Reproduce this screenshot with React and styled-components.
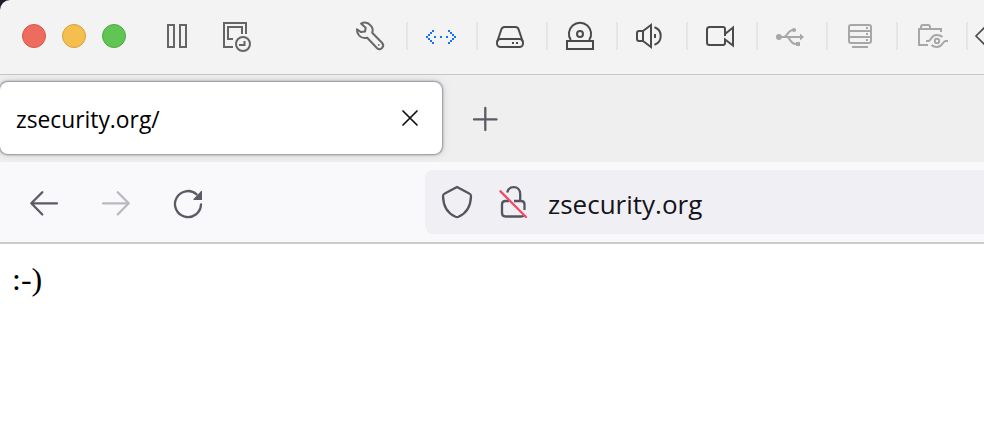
import React from "react";
import styled, { createGlobalStyle } from "styled-components";

const GlobalStyle = createGlobalStyle`
  * { box-sizing: border-box; }
  body { margin: 0; background: #fff; overflow: hidden; }
  svg { display: block; flex: none; overflow: visible; }
`;

const Window = styled.div`
  display: flex;
  flex-direction: column;
  width: 984px;
  height: 446px;
  overflow: hidden;
  background: #fff;
`;

const TitleBarBacking = styled.div`
  flex: none;
  background: #1c1e2e;
`;

const TitleBar = styled.header`
  display: flex;
  height: 75px;
  padding-left: 22px;
  background: #f3f3f3;
  border-bottom: 1px solid #c6c6c6;
  border-top-left-radius: 10px;
`;

const TrafficLights = styled.div`
  display: flex;
  flex: none;
  gap: 16px;
  padding-top: 24px;
`;

const Light = styled.span`
  width: 24px;
  height: 24px;
  border-radius: 50%;
  background: ${(p) => p.$fill};
  border: 1px solid ${(p) => p.$edge};
`;

const SessionControls = styled.div`
  display: flex;
  flex: none;
  gap: 36px;
  width: 212px;
  padding: 20px 0 0 40px;
`;

const Devices = styled.div`
  display: flex;
  flex: none;
  padding-top: 20px;
`;

const DeviceCell = styled.div`
  display: flex;
  flex: none;
  width: 70px;
  padding-left: 18px;
  color: ${(p) => p.$color || "#4b4b4b"};
`;

const Divider = styled.span`
  flex: none;
  width: 2px;
  height: 28px;
  margin: 2px 0 0 18px;
  background: #e5e5e5;
`;

const Overflow = styled.div`
  padding: 6px 0 0 7px;
  color: #4b4b4b;
`;

const TabStrip = styled.div`
  display: flex;
  flex: none;
  height: 87px;
  padding-top: 7px;
  background: #efefef;
`;

const Tab = styled.div`
  display: flex;
  align-items: center;
  justify-content: space-between;
  width: 442px;
  height: 72px;
  padding: 0 24px 0 16px;
  border-radius: 8px;
  background: #fff;
  box-shadow: 0 0 2px 0.5px rgba(90, 90, 110, 0.6), 0 0 8px rgba(100, 100, 100, 0.28);
`;

const TabTitle = styled.span`
  font: 22.8px/32px "Open Sans", "Noto Sans", sans-serif;
  color: #000;
  padding-top: 4px;
`;

const NewTab = styled.div`
  padding: 25px 0 0 31px;
  color: #5b5b66;
`;

const NavBar = styled.nav`
  display: flex;
  flex: none;
  height: 82px;
  padding: 8px 0 0 30px;
  background: #f9f9fb;
  border-bottom: 2px solid #cccccc;
`;

const NavButtons = styled.div`
  display: flex;
  flex: none;
  gap: 44px;
  width: 395px;
  padding-top: 20px;
  color: #5b5b66;
`;

const AddressBar = styled.div`
  display: flex;
  flex: 1;
  height: 64px;
  padding: 16px 0 0 17px;
  background: #f0f0f4;
  border-radius: 8px 0 0 8px;
`;

const LockSlot = styled.div`
  margin: 0 19px 0 27px;
`;

const Address = styled.span`
  font: 26px/36px "Open Sans", "Noto Sans", sans-serif;
  color: #15141a;
`;

const Page = styled.main`
  padding: 17px 12px;
  font: 32px/37px "Liberation Serif", serif;
  color: #000;
`;

const Icon = ({ children, w = 32, h = 32, stroke = 2, ...rest }) => (
  <svg width={w} height={h} viewBox={`0 0 ${w} ${h}`} fill="none" stroke="currentColor" strokeWidth={stroke} {...rest}>
    {children}
  </svg>
);

const PauseIcon = () => (
  <Icon w={21} color="#656565">
    <path d="M2 5h6v22H2zM14 5h6v22h-6z" />
  </Icon>
);

const SnapshotIcon = () => (
  <Icon color="#656565">
    <path d="M10 27H1V3h22v11M10 19H5V7h14v7" />
    <circle cx="20" cy="24" r="7" />
    <path d="M21.5 21v4H16" />
  </Icon>
);

const WrenchIcon = () => (
  <Icon strokeLinejoin="round">
    <path d="M5 3.6C8 2 12 2.4 14.8 5.6C17 8 17 10.500 16.200 12.700L26 22.700C27.500 24.300 27.500 26.400 26 28C24.500 29.400 22.300 29.400 20.900 28L11.200 17.700C8.500 18.500 5.500 17.800 3.200 15.600C1.400 13.800 .8 11.800 .9 9.200L5 12.100L9 11.500L9.700 7.800Z" />
    <circle cx="22.800" cy="24.800" r=".9" fill="currentColor" stroke="none" />
  </Icon>
);

const NETWORK_DOTS = [
  [6, 10], [4, 12], [2, 14], [0, 16], [2, 18], [4, 20], [6, 22],
  [8, 16], [14, 16], [20, 16],
  [22, 10], [24, 12], [26, 14], [28, 16], [26, 18], [24, 20], [22, 22],
];

const NetworkIcon = () => (
  <Icon>
    {NETWORK_DOTS.map(([x, y]) => (
      <rect key={`${x}-${y}`} x={x} y={y} width="2" height="2" fill="currentColor" stroke="none" />
    ))}
  </Icon>
);

const DiskIcon = () => (
  <Icon>
    <path d="M1.300 21.500L5.400 9.300C6 7.600 6.800 7 8.500 7h11c1.700 0 2.500 .6 3.100 2.300L26.700 21.500" />
    <rect x="1" y="19" width="26" height="8" rx="3.500" />
    <path d="M16 23h2M20 23h2" />
  </Icon>
);

const OpticalIcon = () => (
  <Icon>
    <path d="M4.800 20A11.100 11.100 0 1 1 23.200 20" />
    <circle cx="14" cy="14" r="3" />
    <path d="M1 21h26v8H1z" />
  </Icon>
);

const SpeakerIcon = () => (
  <Icon>
    <path d="M7 11H3Q1 11 1 13V19Q1 21 3 21H7ZM7 11L15 5V27L7 21" />
    <path d="M18.500 7.300A9.200 9.200 0 0 1 18.500 24.700M19 14v4" />
  </Icon>
);

const CameraIcon = () => (
  <Icon>
    <path d="M19 16V9Q19 7 17 7H3.500Q1 7 1 9.500V22.500Q1 25 3.500 25H17Q19 25 19 23V19.500L27 25.500V7.500L19 14" />
  </Icon>
);

const UsbIcon = () => (
  <Icon>
    <path d="M3 17h22M8 17C11 17 12 10 17 10M11 17C14 17 14 24 20 24" />
    <g fill="currentColor" stroke="none">
      <circle cx="2.900" cy="17" r="2.900" />
      <circle cx="18" cy="10" r="2.100" />
      <path d="M24 13.500l4 3.500-4 3.500zM20 22h4v4h-4z" />
    </g>
  </Icon>
);

const ServerIcon = () => (
  <Icon>
    <rect x="3" y="5" width="22" height="18" rx="2" />
    <path d="M3 11h22M3 17h22M6 27h16M20 8h2M20 14h2M20 20h2" />
  </Icon>
);

const SharedFolderIcon = () => (
  <Icon>
    <path d="M12 25H3V9H25V12M5 9V7Q5 5 7 5H12Q14 5 14 7V9" />
    <circle cx="21" cy="21" r="2.200" />
    <path d="M10 21h2.500C15 21 15 15 20.500 15C23 15 25 15.500 26.500 17M15.500 25C17 26.500 19 27 21 27C27 27 26.500 21 29.500 21h2.500" />
  </Icon>
);

const DEVICES = [
  { Glyph: WrenchIcon, color: "#686868" },
  { Glyph: NetworkIcon, color: "#1673f5" },
  { Glyph: DiskIcon },
  { Glyph: OpticalIcon },
  { Glyph: SpeakerIcon },
  { Glyph: CameraIcon },
  { Glyph: UsbIcon, color: "#a7a7a7" },
  { Glyph: ServerIcon, color: "#a7a7a7" },
  { Glyph: SharedFolderIcon, color: "#a7a7a7" },
];

export default function App() {
  return (
    <Window>
      <GlobalStyle />
      <TitleBarBacking>
        <TitleBar>
          <TrafficLights>
            <Light $fill="#ed6b5f" $edge="#d95549" />
            <Light $fill="#f5bf4f" $edge="#d9a03c" />
            <Light $fill="#61c554" $edge="#51a842" />
          </TrafficLights>
          <SessionControls>
            <PauseIcon />
            <SnapshotIcon />
          </SessionControls>
          <Devices>
            {DEVICES.map(({ Glyph, color }, i) => (
              <DeviceCell key={i} $color={color}>
                <Glyph />
                <Divider />
              </DeviceCell>
            ))}
            <Overflow>
              <Icon w={20} h={20} stroke={1.6}>
                <path d="M10.500 .5L1 10l9.500 9.500" />
              </Icon>
            </Overflow>
          </Devices>
        </TitleBar>
      </TitleBarBacking>
      <TabStrip>
        <Tab>
          <TabTitle>zsecurity.org/</TabTitle>
          <Icon w={16} h={16} stroke={1.7} color="#111" strokeLinecap="round">
            <path d="M1 1l14 14M15 1L1 15" />
          </Icon>
        </Tab>
        <NewTab>
          <Icon w={24} h={24} stroke={2.3} strokeLinecap="round">
            <path d="M12.300 1v22M1 12.400h22.500" />
          </Icon>
        </NewTab>
      </TabStrip>
      <NavBar>
        <NavButtons>
          <Icon w={28} h={28} stroke={2.3} strokeLinecap="round" strokeLinejoin="round">
            <path d="M27 13.300H1.500M12.300 2.200L1.300 13.300L12.300 24.500" />
          </Icon>
          <Icon w={28} h={28} stroke={2.3} strokeLinecap="round" strokeLinejoin="round" color="#b9b9c1">
            <path d="M1 13.300H26.500M15.700 2.200L26.700 13.300L15.700 24.500" />
          </Icon>
          <Icon w={28} h={28} stroke={2.3} strokeLinecap="round">
            <path d="M22.600 4.300A13 13 0 1 0 27 14.400" />
            <path d="M28 1v9H20q-1.300 0-.5-1L27 1.200q.8-.8 1-.2z" fill="currentColor" stroke="none" />
          </Icon>
        </NavButtons>
        <AddressBar>
          <Icon w={30} stroke={2.3} strokeLinejoin="round" color="#55555e">
            <path d="M15 1L27.200 7.500Q29 8.200 29 10.200C28.700 20.500 24 27.500 16.500 30.800Q15 31.400 13.500 30.800C6 27.500 1.300 20.500 1 10.200Q1 8.200 2.800 7.500Z" />
          </Icon>
          <LockSlot>
            <Icon w={30} stroke={2.3} color="#55555e">
              <path d="M8.200 6.500C9 3.200 11.500 1.200 14.700 1.200C18.500 1.200 21.200 4 21.200 8V15M15 15H22Q25.500 15 25.500 18.500V24M10 15H6.500Q3 15 3 18.500V27Q3 30.500 6.500 30.500H22Q24 30.500 25 29.500" />
              <path d="M1.500 5.300L27 31" stroke="#ee4e66" strokeWidth="2.400" strokeLinecap="round" />
            </Icon>
          </LockSlot>
          <Address>zsecurity.org</Address>
        </AddressBar>
      </NavBar>
      <Page>:-)</Page>
    </Window>
  );
}
